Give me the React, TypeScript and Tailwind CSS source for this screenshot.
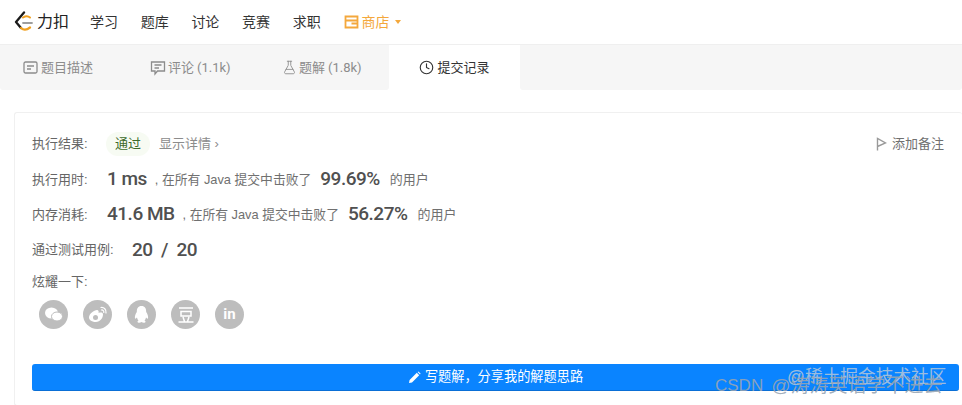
import { Clock, FlaskConical } from 'lucide-react';

const cjk = "font-['Liberation_Sans','Noto_Sans_CJK_SC',sans-serif]";
const num = "font-['Roboto','Noto_Sans_CJK_SC',sans-serif]";

const navItems = ['学习', '题库', '讨论', '竞赛', '求职'];

function Logo() {
  return (
    <svg width="19" height="22" viewBox="0 0 19 22" fill="none" className="shrink-0">
      <path d="M10 1.5 L2 11 L7 17" stroke="#1a1a1a" strokeWidth="2.3" strokeLinecap="round" strokeLinejoin="round" />
      <path d="M7 17 Q11 20.5 16 16.5" stroke="#f0a020" strokeWidth="2.3" strokeLinecap="round" />
      <path d="M9 12 H18" stroke="#9e9e9e" strokeWidth="1.8" strokeLinecap="round" />
      <path d="M9 6.5 Q13 4 16 6.5" stroke="#f0a020" strokeWidth="2" strokeLinecap="round" />
    </svg>
  );
}

function StatRow({ label, value, pct }: { label: string; value: string; pct: string }) {
  return (
    <div className="flex items-center text-[13px] text-[#666] h-[35px]">
      <span className="w-[75px] shrink-0">{label}</span>
      <span className={`${num} text-[19px] font-medium text-[#505050] tracking-[-0.5px] mr-[8px]`}>{value}</span>
      <span className="text-[12.8px] text-[#707070]">, 在所有 Java 提交中击败了</span>
      <span className={`${num} text-[19px] font-medium text-[#505050] tracking-[-0.5px] ml-[9px]`}>{pct}</span>
      <span className="text-[13px] text-[#707070] ml-[10px]">的用户</span>
    </div>
  );
}

function Circle({ children }: { children: React.ReactNode }) {
  return (
    <div className="w-[29px] h-[29px] rounded-full bg-[#bdbdbd] flex items-center justify-center text-white shrink-0">
      {children}
    </div>
  );
}

export default function App() {
  return (
    <div className={`relative w-[962px] h-[405px] overflow-hidden bg-white ${cjk}`}>
      {/* top nav */}
      <header className="h-[45px] flex items-center border-b border-[#efefef] pl-[14px]">
        <Logo />
        <span className="ml-[4px] text-[16px] text-[#222] w-[34px] whitespace-nowrap leading-none">力扣</span>
        <nav className="flex items-center ml-[19px] gap-[22.7px] text-[14px] text-[#333]">
          {navItems.map((item) => (
            <span key={item} className="w-[28px] whitespace-nowrap">{item}</span>
          ))}
          <span className="flex items-center text-[#f4a83c] ml-[1px]">
            <svg width="15" height="14" viewBox="0 0 15 14" fill="none" stroke="#f4a83c" strokeWidth="1.8" className="mr-[2px]">
              <path d="M1.5 1.5 H13.5 V12.5 H1.5 Z M1.5 5.5 H13.5 M7.5 8.5 H13.5" />
            </svg>
            <span className="whitespace-nowrap">商店</span>
            <span className="ml-[6px] w-0 h-0 border-x-[3px] border-x-transparent border-t-[4px] border-t-[#f4a83c]" />
          </span>
        </nav>
      </header>

      {/* tabs */}
      <div className="flex h-[45px] text-[13px] text-[#8c8c8c]">
        <div className="w-[389px] bg-[#f6f6f6] rounded-b-[3px] flex items-center relative">
          <span className="flex items-center gap-[3px] ml-[23px] w-[127px]">
            <svg width="15" height="13" viewBox="0 0 15 13" fill="none" stroke="#8c8c8c" strokeWidth="1.3">
              <rect x="1" y="1" width="13" height="11" rx="1.5" />
              <path d="M4 5 H11 M4 8 H8" />
            </svg>
            题目描述
          </span>
          <span className="flex items-center gap-[2px] w-[132px]">
            <svg width="16" height="16" viewBox="0 0 16 16" fill="none" stroke="#8c8c8c" strokeWidth="1.3">
              <path d="M1.5 2 H14.5 V11 H7.5 L5 14 V11 H1.5 Z M4.5 5 H11.5 M4.5 8 H9" />
            </svg>
            评论 <span className={`${num} ml-[1px] text-[13px]`}>(1.1k)</span>
          </span>
          <span className="flex items-center gap-[2px]">
            <FlaskConical size={15} strokeWidth={1.4} />
            题解 <span className={`${num} ml-[1px] text-[13px]`}>(1.8k)</span>
          </span>
        </div>
        <div className="w-[131px] flex items-center justify-center gap-[3px] text-[#333]">
          <Clock size={15} strokeWidth={1.8} />
          提交记录
        </div>
        <div className="flex-1 bg-[#f6f6f6] rounded-b-[3px]" />
      </div>

      {/* result card */}
      <div className="ml-[14px] mt-[22px] h-[294px] border border-[#f0f0f0] rounded-[3px] border-r-0 pl-[17px] pr-[2px] pt-[13px]">
        <div className="flex items-center h-[36px] text-[13px] text-[#666]">
          <span className="w-[75px] shrink-0">执行结果:</span>
          <span className="w-[44px] h-[24px] -ml-[1px] rounded-full bg-[#f7fbf3] text-[#3d6b2a] flex items-center justify-center">通过</span>
          <span className="ml-[9px] text-[#8c8c8c]">显示详情 ›</span>
          <span className="ml-auto mr-[16px] flex items-center gap-[5px] text-[#707070]">
            <svg width="11" height="14" viewBox="0 0 11 14" fill="none" stroke="#9a9a9a" strokeWidth="1.4">
              <path d="M1.5 13.5 V1.5 L9.5 6 L1.5 9.5" />
            </svg>
            添加备注
          </span>
        </div>
        <StatRow label="执行用时:" value="1 ms" pct="99.69%" />
        <StatRow label="内存消耗:" value="41.6 MB" pct="56.27%" />
        <div className="flex items-center h-[36px] text-[13px] text-[#666]">
          <span className="w-[100px] shrink-0">通过测试用例:</span>
          <span className={`${num} text-[19px] font-medium text-[#505050] tracking-[-0.5px] whitespace-pre`}>20  /  20</span>
        </div>
        <div className="mt-[4px] text-[13px] text-[#666] leading-[20px]">炫耀一下:</div>
        <div className="flex gap-[15px] ml-[7px] mt-[8px]">
          <Circle>
            <svg width="19" height="17" viewBox="0 0 19 17" fill="white">
              <ellipse cx="7.5" cy="7" rx="6.5" ry="5.5" />
              <ellipse cx="13" cy="10.5" rx="5.5" ry="4.5" stroke="#bdbdbd" strokeWidth="1" />
            </svg>
          </Circle>
          <Circle>
            <svg width="20" height="17" viewBox="0 0 20 17" fill="none">
              <path d="M8 16 C3 16 1 13.5 1 11.5 C1 8 6 4 9 4 C10.5 4 11 5.5 10.5 7 C13 6 15 6.5 15 8.5 C15 12 12 16 8 16 Z" fill="white" />
              <circle cx="7.5" cy="11.5" r="2.5" fill="#bdbdbd" />
              <path d="M13 1.5 C16 1 18.5 3.5 18 7 M13.5 4 C15 3.8 16 5 15.8 6.5" stroke="white" strokeWidth="1.2" strokeLinecap="round" />
            </svg>
          </Circle>
          <Circle>
            <svg width="17" height="19" viewBox="0 0 17 19" fill="white">
              <path d="M8.5 1 C5 1 3.8 3.5 3.8 7 C2.5 9 1.5 11.5 2 13.5 C2.6 14 3.4 13 4 12.5 C4.3 14 5 15 5.5 15.5 C4.5 16 4 17 5 17.5 C6.5 18 7.5 17.5 8.5 17 C9.5 17.5 10.5 18 12 17.5 C13 17 12.5 16 11.5 15.5 C12 15 12.7 14 13 12.5 C13.6 13 14.4 14 15 13.5 C15.5 11.5 14.5 9 13.2 7 C13.2 3.5 12 1 8.5 1 Z" />
            </svg>
          </Circle>
          <Circle>
            <svg width="18" height="18" viewBox="0 0 18 18" fill="none" stroke="white" strokeWidth="1.5">
              <path d="M2 2 H16 M4 5.5 H14 V10 H4 Z M6 11 L7.5 15.5 M12 11 L10.5 15.5 M1.5 16 H16.5" />
            </svg>
          </Circle>
          <Circle>
            <span className={`${num} text-[15px] font-bold leading-none`}>in</span>
          </Circle>
        </div>
        <button className="mt-[35px] w-[927px] h-[27px] bg-[#0a84ff] rounded-[3px] text-white text-[13.2px] flex items-center justify-center gap-[4px] border-b border-[#0a6fd6]">
          <svg width="13" height="13" viewBox="0 0 13 13" fill="white">
            <path d="M1 12 L1.6 9 L8.8 1.8 L11.2 4.2 L4 11.4 Z M9.6 1 L10.4 0.4 L12.6 2.6 L12 3.4 Z" />
          </svg>
          写题解，分享我的解题思路
        </button>
      </div>

      {/* image watermark */}
      <div className="absolute left-[787px] top-[369px] text-[17.7px] text-[#c4ccd6]/80 whitespace-nowrap leading-none">@稀土掘金技术社区</div>
      <div className="absolute left-[715px] top-[376px] flex items-center text-[19px] text-[#98a4b2]/90 whitespace-nowrap leading-none">
        <span className="text-[17px]">CSDN</span>
        <span className="ml-[8px]">@涛涛英语学不进去</span>
      </div>
    </div>
  );
}
